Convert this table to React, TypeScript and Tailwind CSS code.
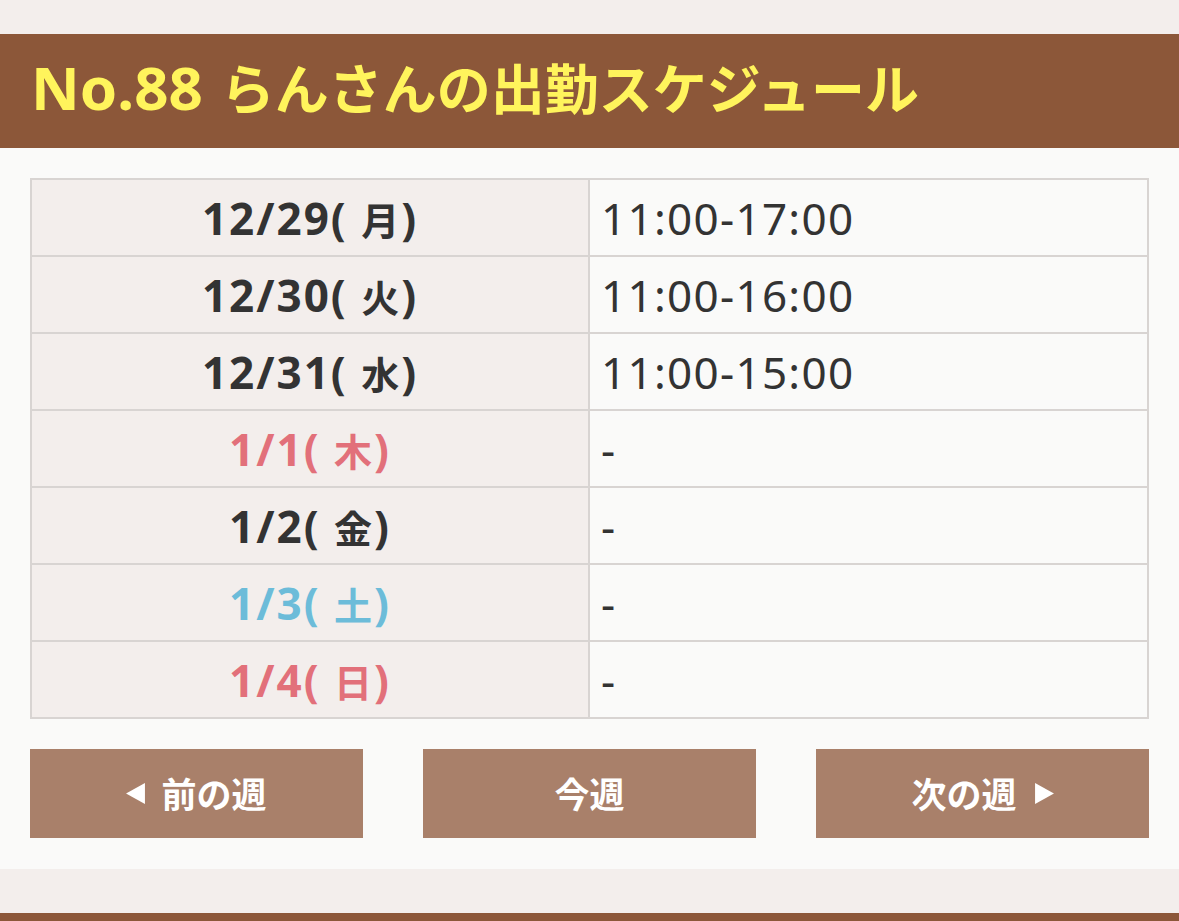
const rows = [
    { md: "12/29", day: "月", time: "11:00-17:00", color: "text-[#333333]" },
    { md: "12/30", day: "火", time: "11:00-16:00", color: "text-[#333333]" },
    { md: "12/31", day: "水", time: "11:00-15:00", color: "text-[#333333]" },
    { md: "1/1", day: "木", time: "-", color: "text-[#e2707a]" },
    { md: "1/2", day: "金", time: "-", color: "text-[#333333]" },
    { md: "1/3", day: "土", time: "-", color: "text-[#6cbcd9]" },
    { md: "1/4", day: "日", time: "-", color: "text-[#e2707a]" },
];

function Arrow({ dir }: { dir: "left" | "right" }) {
    return (
        <svg viewBox="0 0 18 20" className="h-[21px] w-[19px] shrink-0">
            {dir === "left" ? <polygon points="18,0 18,20 0,10" fill="#fff" /> : <polygon points="0,0 0,20 18,10" fill="#fff" />}
        </svg>
    );
}

export default function App() {
    return (
        <div className="min-h-[921px] bg-[#f3eeec] pt-[34px] font-['Noto_Sans','Noto_Sans_CJK_JP',sans-serif] text-[#333333]">
            <h1 className="flex h-[114px] items-center bg-[#8c5739] pb-[8px] pl-[31px] font-bold text-[#fff45c]">
                <span className="text-[60px] leading-none">No.88</span>
                <span className="ml-[18px] font-['Noto_Sans_CJK_JP',sans-serif] text-[54px] leading-none">
                    らんさんの出勤スケジュール
                </span>
            </h1>

            <div className="bg-[#fafaf9] px-[30px] pb-[31px] pt-[30px]">
                <table className="w-full border-collapse">
                    <tbody>
                        {rows.map((row) => (
                            <tr key={row.md} className="h-[77px]">
                                <td
                                    className={`w-[558px] border-2 border-[#d8d4d2] bg-[#f3eeec] text-center text-[44px] font-bold tracking-[2px] ${row.color}`}
                                >
                                    {row.md}( <span className="text-[38px]">{row.day}</span>)
                                </td>
                                <td className="border-2 border-[#d8d4d2] pl-[11px] text-[44px] tracking-[1.3px]">{row.time}</td>
                            </tr>
                        ))}
                    </tbody>
                </table>

                <div className="mt-[30px] flex justify-between font-['Noto_Sans_CJK_JP',sans-serif]">
                    <button className="flex h-[89px] w-[333px] items-center justify-center gap-[16px] bg-[#a9806a] text-[35px] font-bold text-white">
                        <Arrow dir="left" />
                        前の週
                    </button>
                    <button className="flex h-[89px] w-[333px] items-center justify-center bg-[#a9806a] text-[35px] font-bold text-white">
                        今週
                    </button>
                    <button className="flex h-[89px] w-[333px] items-center justify-center gap-[18px] bg-[#a9806a] text-[35px] font-bold text-white">
                        次の週
                        <Arrow dir="right" />
                    </button>
                </div>
            </div>

            <div className="mt-[44px] h-[9px] bg-[#8c5739]" />
        </div>
    );
}
